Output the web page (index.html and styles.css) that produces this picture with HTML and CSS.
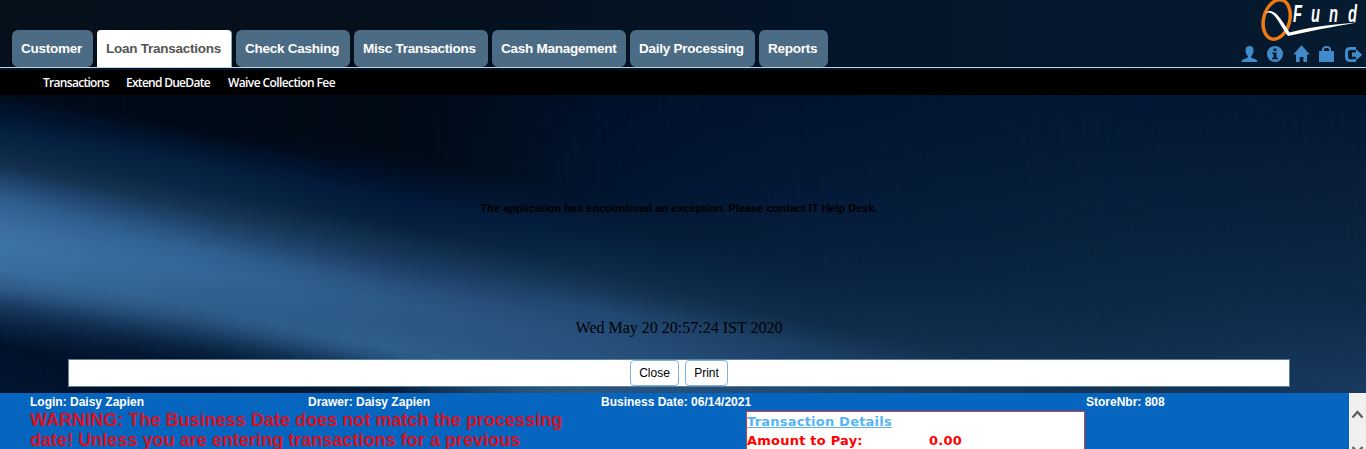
FILE: index.html
```html
<!DOCTYPE html>
<html lang="en">
<head>
<meta charset="utf-8">
<title>QFund</title>
<link rel="stylesheet" href="styles.css">
</head>
<body>
<svg class="backdrop" viewBox="0 0 1366 393" width="1366" height="393" aria-hidden="true">
  <defs>
    <linearGradient id="c0" gradientUnits="userSpaceOnUse" x1="0" y1="0" x2="0" y2="400">
      <stop offset=".23" stop-color="#000c1b"/><stop offset=".27" stop-color="#00122b"/><stop offset=".325" stop-color="#05203f"/><stop offset=".41" stop-color="#142f4d"/><stop offset=".44" stop-color="#1d4068"/><stop offset=".5" stop-color="#2f5f8f"/><stop offset=".56" stop-color="#3c6c9f"/><stop offset=".61" stop-color="#3f74a9"/><stop offset=".675" stop-color="#3a6c9f"/><stop offset=".717" stop-color="#2f5c89"/><stop offset=".762" stop-color="#193a60"/><stop offset=".812" stop-color="#0a2342"/><stop offset=".862" stop-color="#02122b"/><stop offset="1" stop-color="#031631"/>
    </linearGradient>
    <linearGradient id="c1" gradientUnits="userSpaceOnUse" x1="0" y1="-40" x2="0" y2="360">
      <stop offset=".325" stop-color="#000a16"/><stop offset=".362" stop-color="#00132d"/><stop offset=".412" stop-color="#05203e"/><stop offset=".475" stop-color="#0b2747"/><stop offset=".525" stop-color="#163654"/><stop offset=".575" stop-color="#234a74"/><stop offset=".625" stop-color="#2f6090"/><stop offset=".675" stop-color="#356699"/><stop offset=".725" stop-color="#316190"/><stop offset=".768" stop-color="#2e5d8a"/><stop offset=".8" stop-color="#27507a"/><stop offset=".84" stop-color="#15375a"/><stop offset=".878" stop-color="#08203c"/><stop offset=".915" stop-color="#03132b"/><stop offset="1" stop-color="#010f25"/>
    </linearGradient>
    <linearGradient id="c2" gradientUnits="userSpaceOnUse" x1="0" y1="-80" x2="0" y2="320">
      <stop offset=".38" stop-color="#000a15"/><stop offset=".45" stop-color="#00112a"/><stop offset=".5" stop-color="#03193a"/><stop offset=".562" stop-color="#081f3e"/><stop offset=".612" stop-color="#12304f"/><stop offset=".662" stop-color="#1b3c63"/><stop offset=".712" stop-color="#284f7b"/><stop offset=".762" stop-color="#2c5984"/><stop offset=".825" stop-color="#2c5884"/><stop offset=".875" stop-color="#2f5e8b"/><stop offset=".905" stop-color="#25517c"/><stop offset=".945" stop-color="#0f2f50"/><stop offset=".983" stop-color="#061d38"/>
    </linearGradient>
    <linearGradient id="c3" gradientUnits="userSpaceOnUse" x1="0" y1="-120" x2="0" y2="280">
      <stop offset=".24" stop-color="#00102a"/><stop offset=".5" stop-color="#02152f"/><stop offset=".6" stop-color="#06203f"/><stop offset=".675" stop-color="#0d2b49"/><stop offset=".725" stop-color="#163757"/><stop offset=".775" stop-color="#214870"/><stop offset=".85" stop-color="#274f7a"/><stop offset=".983" stop-color="#2a5681"/>
    </linearGradient>
    <linearGradient id="c4" gradientUnits="userSpaceOnUse" x1="0" y1="-160" x2="0" y2="240">
      <stop offset=".24" stop-color="#01142e"/><stop offset=".5" stop-color="#041a38"/><stop offset=".675" stop-color="#092240"/><stop offset=".8" stop-color="#102c4a"/><stop offset=".863" stop-color="#1b3d62"/><stop offset=".983" stop-color="#234974"/>
    </linearGradient>
    <linearGradient id="c5" gradientUnits="userSpaceOnUse" x1="0" y1="-220" x2="0" y2="180">
      <stop offset=".24" stop-color="#021735"/><stop offset=".5" stop-color="#071f3c"/><stop offset=".75" stop-color="#0b2844"/><stop offset=".983" stop-color="#153556"/>
    </linearGradient>
    <linearGradient id="c6" gradientUnits="userSpaceOnUse" x1="0" y1="-273" x2="0" y2="127">
      <stop offset=".24" stop-color="#031734"/><stop offset=".5" stop-color="#0a203c"/><stop offset=".75" stop-color="#0e2948"/><stop offset=".983" stop-color="#183a60"/>
    </linearGradient>
    <linearGradient id="f1" gradientUnits="userSpaceOnUse" x1="0" x2="200"><stop stop-color="#000"/><stop offset="1" stop-color="#fff"/></linearGradient>
    <linearGradient id="f2" gradientUnits="userSpaceOnUse" x1="200" x2="400"><stop stop-color="#000"/><stop offset="1" stop-color="#fff"/></linearGradient>
    <linearGradient id="f3" gradientUnits="userSpaceOnUse" x1="400" x2="600"><stop stop-color="#000"/><stop offset="1" stop-color="#fff"/></linearGradient>
    <linearGradient id="f4" gradientUnits="userSpaceOnUse" x1="600" x2="800"><stop stop-color="#000"/><stop offset="1" stop-color="#fff"/></linearGradient>
    <linearGradient id="f5" gradientUnits="userSpaceOnUse" x1="800" x2="1100"><stop stop-color="#000"/><stop offset="1" stop-color="#fff"/></linearGradient>
    <linearGradient id="f6" gradientUnits="userSpaceOnUse" x1="1100" x2="1366"><stop stop-color="#000"/><stop offset="1" stop-color="#fff"/></linearGradient>
    <mask id="m1" maskUnits="userSpaceOnUse" x="0" y="-300" width="1366" height="800"><rect y="-300" width="1366" height="800" fill="url(#f1)"/></mask>
    <mask id="m2" maskUnits="userSpaceOnUse" x="0" y="-300" width="1366" height="800"><rect y="-300" width="1366" height="800" fill="url(#f2)"/></mask>
    <mask id="m3" maskUnits="userSpaceOnUse" x="0" y="-300" width="1366" height="800"><rect y="-300" width="1366" height="800" fill="url(#f3)"/></mask>
    <mask id="m4" maskUnits="userSpaceOnUse" x="0" y="-300" width="1366" height="800"><rect y="-300" width="1366" height="800" fill="url(#f4)"/></mask>
    <mask id="m5" maskUnits="userSpaceOnUse" x="0" y="-300" width="1366" height="800"><rect y="-300" width="1366" height="800" fill="url(#f5)"/></mask>
    <mask id="m6" maskUnits="userSpaceOnUse" x="0" y="-300" width="1366" height="800"><rect y="-300" width="1366" height="800" fill="url(#f6)"/></mask>
  </defs>
  <g transform="skewY(11.31)">
    <rect y="-300" width="1366" height="800" fill="url(#c0)"/>
    <rect y="-300" width="1366" height="800" fill="url(#c1)" mask="url(#m1)"/>
    <rect y="-300" width="1366" height="800" fill="url(#c2)" mask="url(#m2)"/>
    <rect y="-300" width="1366" height="800" fill="url(#c3)" mask="url(#m3)"/>
    <rect y="-300" width="1366" height="800" fill="url(#c4)" mask="url(#m4)"/>
    <rect y="-300" width="1366" height="800" fill="url(#c5)" mask="url(#m5)"/>
    <rect y="-300" width="1366" height="800" fill="url(#c6)" mask="url(#m6)"/>
  </g>
</svg>
<div class="page">
  <header class="header">
    <nav class="tabs">
      <a class="tab t1">Customer</a>
      <a class="tab t2 active">Loan Transactions</a>
      <a class="tab t3">Check Cashing</a>
      <a class="tab t4">Misc Transactions</a>
      <a class="tab t5">Cash Management</a>
      <a class="tab t6">Daily Processing</a>
      <a class="tab t7">Reports</a>
    </nav>
    <div class="brand">
      <svg class="logo" viewBox="0 0 106 43" width="106" height="43" role="img" aria-label="QFund">
        <ellipse cx="16.700" cy="19.500" rx="13" ry="20" transform="rotate(15 16.7 19.5)" fill="none" stroke="#ee7a14" stroke-width="3.500"/>
        <path d="M5 14C7 10 12 9.500 17 14.500C22 20 25.500 26 29.500 32.500C45 28 66 25 97 22.500C72 27 50 31 28 36C22 28 20 23 15.500 17C11.500 12 7.500 11.500 5 14Z" fill="#fff"/>
        <g class="logo-text">
          <text transform="translate(33 22) scale(.64 1)">F</text>
          <text transform="translate(51 22) scale(.64 1)">u</text>
          <text transform="translate(69 22) scale(.64 1)">n</text>
          <text transform="translate(88 22) scale(.64 1)">d</text>
        </g>
      </svg>
      <div class="tools">
        <svg viewBox="0 0 17 17" width="17" height="17"><path d="M8.500 0c2.600 0 4 1.500 4 4.200 0 2.800-1 4.600-2.200 5.700v1.500c1.300 1.300 6.200 1.300 6.200 4.600H.5c0-3.300 5-3.300 6.200-4.600V9.900C5.500 8.800 4.500 7 4.500 4.200 4.500 1.500 6 0 8.500 0Z"/></svg>
        <svg viewBox="0 0 17 17" width="17" height="17"><path fill-rule="evenodd" d="M8 0a8 8 0 1 1 0 16 8 8 0 0 1 0-16ZM6.500 2.500V5h3V2.500ZM5 6.500v1.300H6.500v4H5V13.300h6v-1.500H9.500V6.500Z"/></svg>
        <svg viewBox="0 0 17 17" width="17" height="17"><path d="M8.500-.8 16.800 8.500H14V16h-3.600v-5H6.700v5H3V8.500H.2Z"/></svg>
        <svg viewBox="0 0 17 17" width="17" height="17"><path fill-rule="evenodd" d="M3 5V3.500C3 1.500 4.500 0 7.500 0s4.500 1.500 4.500 3.500V5h2.300q.7 0 .7.700V16H0V5.700Q0 5 .7 5ZM5 5h5V3.500C10 2.400 9.300 1.900 7.500 1.900S5 2.400 5 3.500Z"/></svg>
        <svg viewBox="0 0 17 17" width="17" height="17"><path d="M11 1H5Q0 1 0 6v5q0 5 5 5h6v-2.700H5.200Q3 13.300 3 11V6.200Q3 3.900 5.200 3.900H11ZM11 3.200l6.300 5.500-6.300 5.500V10.800H7V6.600h4Z"/></svg>
      </div>
    </div>
  </header>
  <nav class="subnav">
    <a class="s1">Transactions</a>
    <a class="s2">Extend DueDate</a>
    <a class="s3">Waive Collection Fee</a>
  </nav>
  <main class="content">
    <p class="error">The application has encountered an exception. Please contact IT Help Desk.</p>
    <p class="stamp">Wed May 20 20:57:24 IST 2020</p>
    <div class="actions">
      <button class="btn close">Close</button>
      <button class="btn print">Print</button>
    </div>
  </main>
  <footer class="footer">
    <div class="frame">
      <div class="status">
        <span>Login: Daisy Zapien</span>
        <span>Drawer: Daisy Zapien</span>
        <span>Business Date: 06/14/2021</span>
        <span>StoreNbr: 808</span>
      </div>
      <div class="detail">
        <p class="warning">WARNING: The Business Date does not match the processing<br>date! Unless you are entering transactions for a previous</p>
        <div class="panel">
          <a class="panel-title">Transaction Details</a>
          <div class="amount"><span>Amount to Pay:</span><span>0.00</span></div>
        </div>
      </div>
    </div>
    <div class="scrollbar">
      <svg viewBox="0 0 17 56" width="17" height="56"><path d="M3.500 24.500 8.500 19 13.500 24.500"/><path d="M3.500 54 8.500 59.500 13.500 54"/></svg>
    </div>
  </footer>
</div>
</body>
</html>
```
FILE: styles.css
```css
* { box-sizing: border-box; }
body {
  margin: 0;
  overflow: hidden;
  background: #02122b;
  font-family: "Liberation Sans", Arial, sans-serif;
}
p { margin: 0; }
.backdrop { position: absolute; top: 0; left: 0; z-index: -1; }
.page {
  display: flex;
  flex-direction: column;
  width: 1366px;
  height: 449px;
  overflow: hidden;
}

/* Header */
.header {
  display: flex;
  justify-content: space-between;
  height: 68px;
  border-bottom: 1px solid #c6d3dc;
  background: linear-gradient(90deg, #06101b 0%, #05101d 35%, #041529 62%, #061a30 100%);
}
.tabs { display: flex; gap: 4px; padding: 30px 0 0 12px; }
.tab {
  height: 37px;
  padding-left: 9px;
  border-radius: 6px;
  background: #4c6b84;
  color: #fff;
  font-size: 13.5px;
  font-weight: bold;
  letter-spacing: -0.25px;
  line-height: 37px;
  white-space: nowrap;
}
.tab.active {
  border-radius: 4px 4px 0 0;
  background: #fff;
  box-shadow: 1px 0 0 #8fa7b8;
  color: #555;
}
.t1 { width: 81px; }
.t2 { width: 134px; margin-right: 1px; }
.t3 { width: 114px; }
.t4 { width: 134px; }
.t5 { width: 134px; }
.t6 { width: 125px; }
.t7 { width: 69px; }

.brand { display: flex; flex-direction: column; align-items: flex-end; width: 130px; }
.logo { display: block; flex: none; }
.logo-text {
  fill: #fff;
  font-family: "Liberation Sans", Arial, sans-serif;
  font-size: 23px;
  font-style: italic;
  font-weight: bold;
}
.tools { display: flex; gap: 9px; margin-top: 3px; padding-right: 4px; fill: #428bca; }
.tools svg { overflow: visible; }

/* Sub navigation */
.subnav {
  display: flex;
  gap: 18px;
  height: 27px;
  padding-left: 43px;
  border-top: 2px solid #04142a;
  background: #000;
  color: #fff;
  font: 600 12px/26px "Open Sans", "Noto Sans", sans-serif;
  white-space: nowrap;
}
.s1 { width: 65px; letter-spacing: -0.7px; }
.s2 { width: 84px; letter-spacing: -0.72px; }
.s3 { letter-spacing: -0.6px; }

/* Content */
.content { display: flex; flex-direction: column; align-items: center; height: 298px; padding-right: 8px; }
.error { margin-top: 106px; font-size: 11px; font-weight: bold; line-height: 14px; }
.stamp {
  margin-top: 103px;
  font-family: "Liberation Serif", "Times New Roman", serif;
  font-size: 16px;
  line-height: 20px;
}
.actions {
  display: flex;
  justify-content: center;
  gap: 6px;
  width: 1222px;
  height: 28px;
  margin-top: 21px;
  border: 1px solid #5b819c;
  background: #fff;
}
.btn {
  height: 26px;
  padding: 0;
  border: 1px solid #7fb2dc;
  border-radius: 4px;
  background: #fff;
  color: #000;
  font: 12px "Liberation Sans", Arial, sans-serif;
}
.close { width: 49px; }
.print { width: 43px; }

/* Footer frame */
.footer { display: flex; height: 56px; }
.frame { width: 1349px; background: #0666bf; }
.status {
  display: grid;
  grid-template-columns: 278px 293px 485px auto;
  padding-left: 30px;
  color: #fff;
  font-size: 12px;
  font-weight: bold;
  line-height: 18px;
}
.detail { display: flex; height: 38px; overflow: hidden; padding-left: 30px; }
.warning {
  width: 716px;
  margin-top: -1px;
  color: #d8101f;
  font-size: 18px;
  font-weight: bold;
  letter-spacing: 0.04px;
  line-height: 20px;
  white-space: nowrap;
}
.panel {
  width: 339px;
  height: 80px;
  border: 1px solid #d43b3b;
  background: #fff;
  font: bold 13px/19px "DejaVu Sans", Verdana, sans-serif;
  letter-spacing: 0.22px;
}
.panel-title { display: block; color: #56b4f5; text-decoration: underline; }
.amount { display: grid; grid-template-columns: 182px auto; color: #f00; }
.scrollbar { width: 17px; background: #f0f0f0; }
.scrollbar svg { display: block; fill: none; stroke: #606060; stroke-width: 2.400; }
```
